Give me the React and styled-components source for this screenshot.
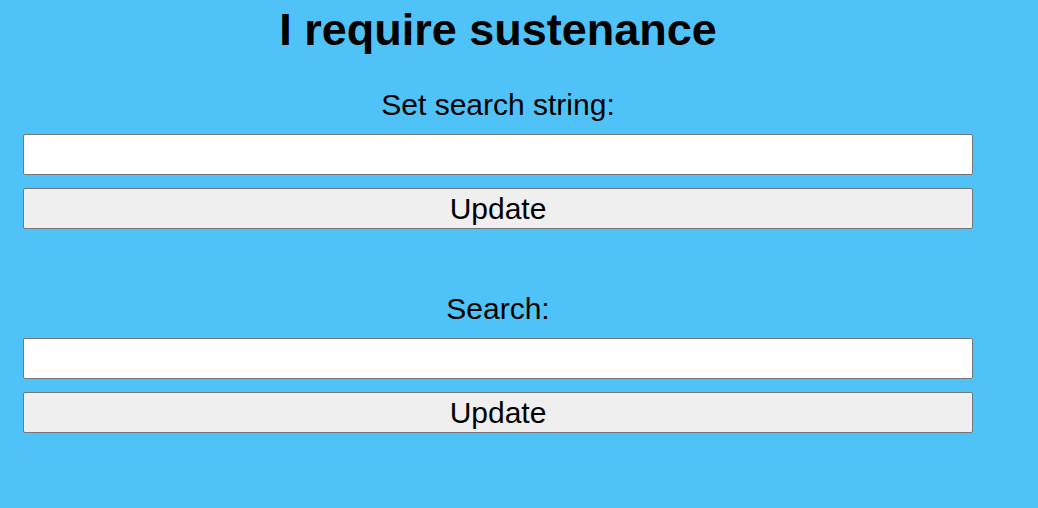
import React, { useState } from 'react';
import styled, { createGlobalStyle } from 'styled-components';

const GlobalStyle = createGlobalStyle`
  html, body {
    margin: 0;
    padding: 0;
    background-color: #4fc3f7;
  }
  body {
    font-family: "Liberation Sans", Arial, sans-serif;
    color: #000;
  }
`;

const App = () => {
  const [searchString, setSearchString] = useState('');
  const [search, setSearch] = useState('');

  return (
    <>
      <GlobalStyle />
      <Page>
        <Title>I require sustenance</Title>
        <Section>
          <Label htmlFor="search-string">Set search string:</Label>
          <Field
            id="search-string"
            value={searchString}
            onChange={(e) => setSearchString(e.target.value)}
          />
          <Button type="button">Update</Button>
        </Section>
        <Section spaced>
          <Label htmlFor="search">Search:</Label>
          <Field
            id="search"
            value={search}
            onChange={(e) => setSearch(e.target.value)}
          />
          <Button type="button">Update</Button>
        </Section>
      </Page>
    </>
  );
};

export default App;

const Page = styled.div`
  display: flex;
  flex-direction: column;
  width: 950px;
  margin-left: 23px;
  padding-top: 4px;
  padding-bottom: 60px;
`;

const Title = styled.h1`
  margin: 0;
  font-size: 45px;
  line-height: 52px;
  font-weight: 700;
  text-align: center;
`;

const Section = styled.div`
  display: flex;
  flex-direction: column;
  margin-top: ${({ spaced }) => (spaced ? '63px' : '32px')};
`;

const Label = styled.label`
  display: block;
  font-size: 30px;
  line-height: 34px;
  text-align: center;
  margin-bottom: 12px;
`;

const Field = styled.input`
  box-sizing: border-box;
  width: 100%;
  height: 41px;
  margin: 0;
  padding: 0 6px;
  font-family: "Liberation Sans", Arial, sans-serif;
  font-size: 30px;
  background-color: #fff;
  border: 1px solid #767676;
  border-radius: 2px;
  outline: none;
`;

const Button = styled.button`
  box-sizing: border-box;
  width: 100%;
  height: 41px;
  margin: 13px 0 0;
  padding: 0;
  font-family: "Liberation Sans", Arial, sans-serif;
  font-size: 30px;
  line-height: 1;
  color: #000;
  background-color: #efefef;
  border: 1px solid #767676;
  border-radius: 2px;
  cursor: pointer;
`;
